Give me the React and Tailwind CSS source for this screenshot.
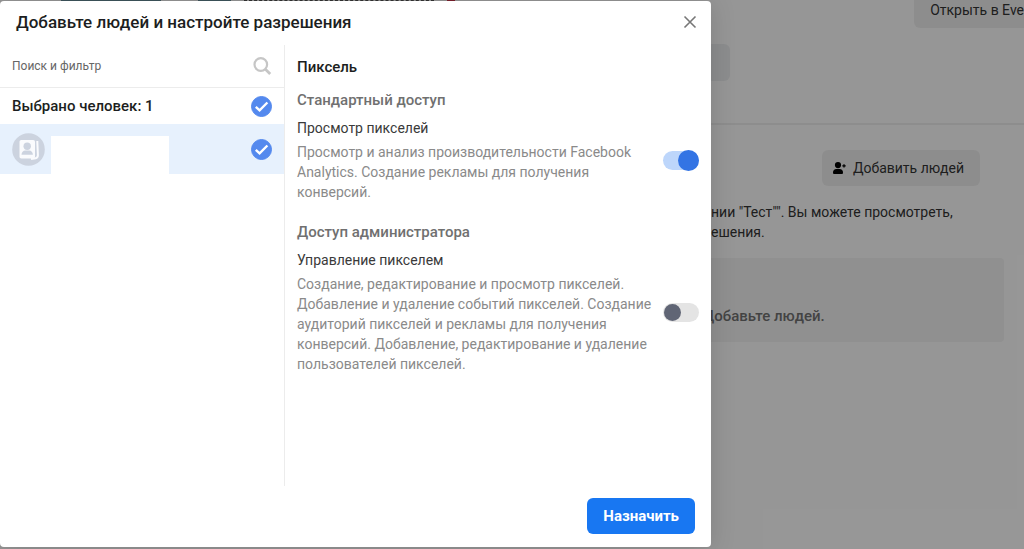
import { useState } from "react";

function CheckBadge({ label }) {
    return (
        <label className="relative block h-[21px] w-[21px] shrink-0 cursor-pointer">
            <input
                type="checkbox"
                defaultChecked
                aria-label={label}
                className="peer block h-full w-full appearance-none rounded-full border border-gray-300 checked:border-[#5489ee] checked:bg-[#5489ee]"
            />
            <svg
                viewBox="0 0 21 21"
                className="pointer-events-none absolute inset-0 hidden peer-checked:block"
                fill="none"
                stroke="white"
                strokeWidth="2.4"
                aria-hidden="true"
            >
                <path d="M4.8 10.8 8.6 14.3l7.8-7.8" />
            </svg>
        </label>
    );
}

function Toggle({ label, checked, onChange }) {
    return (
        <label className="relative block h-[21px] w-9 shrink-0 cursor-pointer">
            <input
                type="checkbox"
                role="switch"
                aria-label={label}
                checked={checked}
                onChange={(e) => onChange(e.target.checked)}
                className="peer block h-full w-full appearance-none"
            />
            <span className="pointer-events-none absolute inset-x-0 inset-y-px rounded-full bg-[#e4e4e4] peer-checked:bg-[#bdd6fb]" />
            <span className="pointer-events-none absolute top-0.5 left-px h-[17px] w-[17px] rounded-full bg-[#606575] peer-checked:top-0 peer-checked:right-0 peer-checked:left-auto peer-checked:h-[21px] peer-checked:w-[21px] peer-checked:bg-[#3374e4]" />
        </label>
    );
}

function Permission({ group, title, text, initial }) {
    const [enabled, setEnabled] = useState(initial);

    return (
        <section>
            <h4 className="text-[15px] leading-5 font-medium text-[#707070]">{group}</h4>
            <div className="mt-2 flex items-center gap-2">
                <div className="min-w-0 flex-1">
                    <h5 className="text-sm leading-5 text-[#3a3a3a]">{title}</h5>
                    <p className="mt-1 text-sm leading-5 text-[#8a8a8a]">{text}</p>
                </div>
                <Toggle label={title} checked={enabled} onChange={setEnabled} />
            </div>
        </section>
    );
}

function PeopleList() {
    return (
        <div className="w-[285px] shrink-0 border-r border-[#ececec]">
            <label className="flex h-[43px] items-center border-b border-[#ececec] px-3">
                <input
                    type="text"
                    aria-label="Поиск и фильтр"
                    placeholder="Поиск и фильтр"
                    className="min-w-0 flex-1 text-xs leading-5 outline-none placeholder:text-[#666]"
                />
                <svg width="20" height="20" viewBox="0 0 20 20" fill="none" stroke="#c6c6c6" strokeWidth="2.2" aria-hidden="true">
                    <circle cx="8.8" cy="8.5" r="6.3" />
                    <path d="m13.4 13.2 4.8 4.8" strokeWidth="2.8" />
                </svg>
            </label>

            <div className="flex h-9 items-center justify-between px-3">
                <span className="text-[15px] leading-5 font-medium text-[#1c1e21]">Выбрано человек: 1</span>
                <CheckBadge label="Выбрано человек" />
            </div>

            <div className="flex h-[50px] items-center bg-[#e7f1fd] px-3">
                <svg width="33" height="33" viewBox="0 0 33 33" aria-hidden="true">
                    <circle cx="16.5" cy="16.5" r="16.3" fill="#ccd3df" />
                    <rect x="7.5" y="7" width="15.5" height="18.5" rx="1.8" fill="#fafbfd" />
                    <circle cx="15.2" cy="13.2" r="3.7" fill="#ccd3df" />
                    <path d="M9.5 21.8c0-2.8 1.8-4 3.6-4.2h4.2c1.8.2 3.6 1.400 3.6 4.200z" fill="#ccd3df" />
                    <path d="m25.3 8 .6 14.300c0 1.700-.8 2.600-2.300 2.900l-4.600.9" fill="none" stroke="#fafbfd" strokeWidth="2" />
                </svg>
                <div className="mt-3 ml-1.5 h-[38px] w-[118px] bg-white" />
                <div className="ml-auto">
                    <CheckBadge label="Человек" />
                </div>
            </div>
        </div>
    );
}

function AssignDialog() {
    return (
        <div
            role="dialog"
            aria-labelledby="dialog-title"
            className="relative mt-px w-full max-w-[711px] rounded-[4px] bg-white shadow-[0_2px_26px_rgba(0,0,0,0.15)]"
        >
            <header className="flex h-11 items-center justify-between pr-3.5 pb-0.5 pl-4">
                <h2 id="dialog-title" className="text-[17px] leading-6 font-medium text-[#1c1e21]">
                    Добавьте людей и настройте разрешения
                </h2>
                <button type="button" aria-label="Закрыть">
                    <svg width="14" height="14" viewBox="0 0 14 14" stroke="#777" strokeWidth="1.6" aria-hidden="true">
                        <path d="m1.5 1.5 11 11M12.5 1.5l-11 11" />
                    </svg>
                </button>
            </header>

            <div className="flex min-h-[441px]">
                <PeopleList />
                <div className="min-w-0 flex-1 px-3 pt-3">
                    <h3 className="text-[15px] leading-5 font-medium text-[#1c1e21]">Пиксель</h3>
                    <div className="mt-[13px] flex flex-col gap-5">
                        <Permission
                            group="Стандартный доступ"
                            title="Просмотр пикселей"
                            text="Просмотр и анализ производительности Facebook Analytics. Создание рекламы для получения конверсий."
                            initial={true}
                        />
                        <Permission
                            group="Доступ администратора"
                            title="Управление пикселем"
                            text="Создание, редактирование и просмотр пикселей. Добавление и удаление событий пикселей. Создание аудиторий пикселей и рекламы для получения конверсий. Добавление, редактирование и удаление пользователей пикселей."
                            initial={false}
                        />
                    </div>
                </div>
            </div>

            <footer className="flex justify-end px-4 pt-3 pb-[13px]">
                <button
                    type="button"
                    className="h-9 rounded-md bg-[#1877f2] px-4 text-[15px] leading-5 font-bold text-white"
                >
                    Назначить
                </button>
            </footer>
        </div>
    );
}

function PixelPage() {
    return (
        <main className="absolute inset-0 overflow-hidden bg-[#fbfbfb] pl-[711px] text-sm leading-5 text-[#333]">
            <section className="h-[125px] border-b-2 border-[#ececec]">
                <div className="flex justify-end">
                    <button type="button" className="h-7 rounded-bl-md bg-[#ececec] pb-2 pl-4 text-left whitespace-nowrap">
                        Открыть в Eve
                    </button>
                </div>
                <div className="mt-4 h-[37px] w-[19px] rounded-r-md bg-[#e9ebed]" />
            </section>

            <section className="pt-[25px] pr-5">
                <div className="flex justify-end pr-6">
                    <button type="button" className="flex h-9 items-center gap-1.5 rounded-md bg-[#ececec] pr-4 pl-2.5 whitespace-nowrap">
                        <svg width="15" height="14" viewBox="0 0 15 14" aria-hidden="true">
                            <circle cx="6" cy="4.1" r="3.1" />
                            <path d="M1 11.500c0-2.300 1.400-3.600 3.400-3.600h3.200c2 0 3.400 1.300 3.400 3.600 0 1-.5 1.500-1.400 1.500H2.400C1.500 13 1 12.500 1 11.500z" />
                            <path d="M12 3.200v3.400M10.300 4.900h3.400" stroke="black" strokeWidth="1.300" />
                        </svg>
                        Добавить людей
                    </button>
                </div>
                <p className="mt-4">
                    нии "Тест"". Вы можете просмотреть,
                    <br />
                    ешения.
                </p>
                <div className="mt-4 flex h-[84px] items-end rounded-r bg-[#f0f0f0] pb-4 text-[15px] font-medium text-[#707070]">
                    <span className="-ml-2">Добавьте людей.</span>
                </div>
            </section>
        </main>
    );
}

export default function App() {
    return (
        <div className="relative min-h-screen overflow-hidden font-['Roboto','Liberation_Sans',sans-serif]">
            <PixelPage />
            <div className="relative flex min-h-screen items-start bg-black/40">
                <div className="absolute top-0 left-[61px] flex h-px gap-[37px]" aria-hidden="true">
                    <span className="w-[100px] bg-[#3d555c]" />
                    <span className="w-[33px] bg-[#3d555c]" />
                </div>
                <div className="absolute top-0 left-[244px] w-[190px] border-t border-dashed border-[#333]" aria-hidden="true" />
                <div className="absolute top-0 left-[447px] h-px w-2 bg-[#7a1f2b]" aria-hidden="true" />
                <AssignDialog />
            </div>
        </div>
    );
}
